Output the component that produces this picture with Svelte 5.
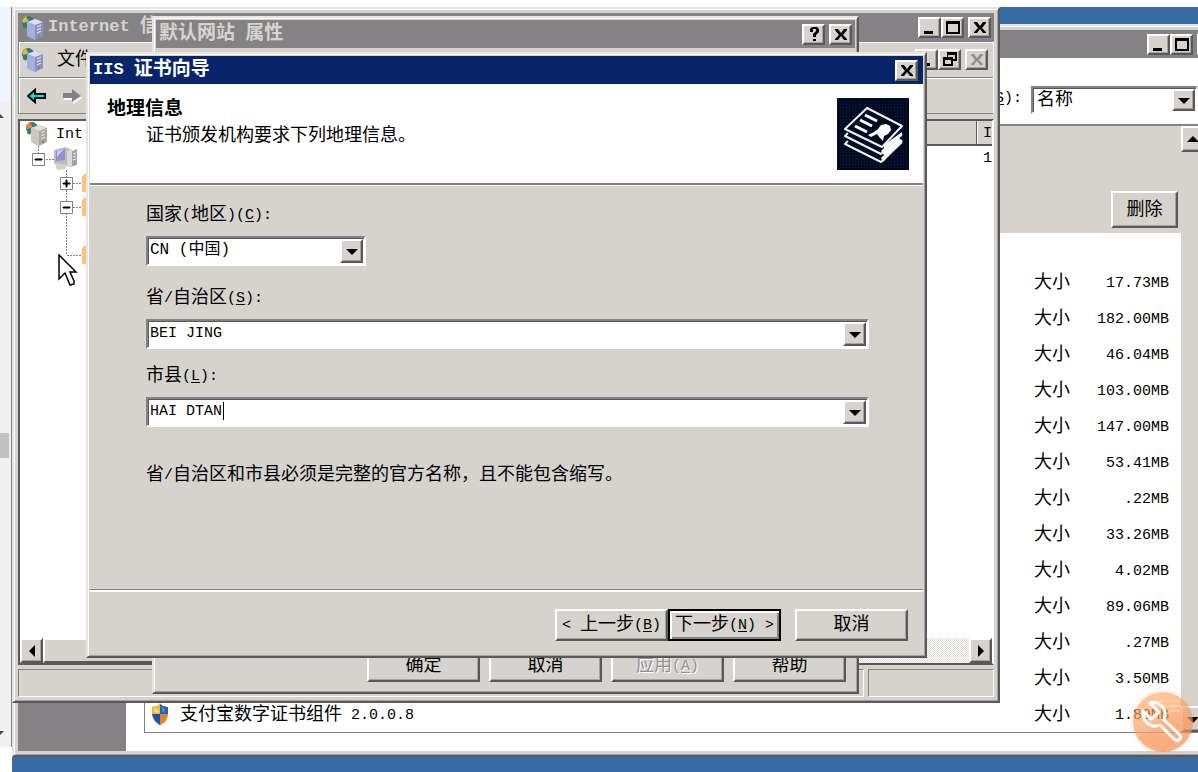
<script>
  const sizes = ['17.73', '182.00', '46.04', '103.00', '147.00', '53.41', '.22', '33.26', '4.02', '89.06', '.27', '3.50', '1.89'];
  let country = $state('CN');
  let province = $state('BEI JING');
  let city = $state('HAI DTAN');

  // Splits a label into Chinese and Latin runs; "_X" marks an access key.
  function runs(label) {
    return label
      .split(/(_[A-Z]|[\x20-\x5e\x60-\x7e]+)/)
      .filter(Boolean)
      .map((s) => ({
        text: s.replace('_', ''),
        key: s[0] === '_',
        latin: /^[\x20-\x7e]+$/.test(s)
      }));
  }
</script>

{#snippet tx(label)}<span class="tx">{#each runs(label) as r}<span class:latin={r.latin} class:key={r.key}>{r.text}</span>{/each}</span>{/snippet}

{#snippet glyph(kind)}
  <svg width="20" height="18" viewBox="0 0 20 18" aria-hidden="true">
    {#if kind === 'min'}
      <path d="M4 12h9v3H4z" />
    {:else if kind === 'max'}
      <path fill-rule="evenodd" d="M3 2h14v13H3zM5 5v8h10V5z" />
    {:else if kind === 'restore'}
      <path fill-rule="evenodd" d="M7 1h10v9h-4v5H3V6h4zM8 4v2h5v2h2V4zM5 9v4h6V9z" />
    {:else if kind === 'help'}
      <path d="M6 6V3l2-2h5l2 2v3l-3 3v2H9V8l3-3V3H9v3zM9 13h3v2H9z" />
    {:else}
      <path d="M4 3h3l3 4 3-4h3v1l-4 5 4 4v1h-3l-3-4-3 4H4v-1l4-4-4-5z" />
    {/if}
  </svg>
{/snippet}

{#snippet server(tint)}
  <svg class="ico" width="24" height="25" viewBox="0 0 24 25" aria-hidden="true">
    <circle cx="7" cy="7" r="6" fill={tint === 'gray' ? '#178a82' : '#1c72b4'} />
    <path d="M1 5 5 1l4 2-3 4-4 1z" fill={tint === 'gray' ? '#f08030' : '#e4b83c'} />
    <path d="m5 2 3-1 2 3-3 1zM2 9l3 1v4L2 12z" fill="#2e8c35" />
    <path d="m6 7 8-3 8 3v14l-8 4-8-4z" fill={tint === 'gray' ? '#aaa89e' : '#8d91bd'} />
    <path d="m6 7 8-3 8 3-8 3z" fill={tint === 'gray' ? '#e0dfd7' : '#dedff4'} />
    <path d="m6 7 8 3v15l-8-4z" fill={tint === 'gray' ? '#cbc9bf' : '#a8ade0'} />
    <path d="m16 12 4-2m-4 5 4-2m-4 5 4-2" stroke="#eceef8" />
    <path d="M17 20h2v2h-2z" fill="#5d9c60" />
  </svg>
{/snippet}

{#snippet tri(dir)}
  <svg width="12" height="12" viewBox="0 0 12 12" aria-hidden="true">
    {#if dir === 'down'}<path d="M0 4h12L6 10z" />
    {:else if dir === 'up'}<path d="M0 9h12L6 3z" />
    {:else if dir === 'left'}<path d="M9 0v12L3 6z" />
    {:else}<path d="M3 0v12l6-6z" />{/if}
  </svg>
{/snippet}

<div class="page">
  <div class="gutter">
    <div class="bubble"></div>
    <i class="up"></i>
    <div class="thumb"></div>
    <i class="down"></i>
  </div>

  <div class="desktop">
    <section class="win programs">
      <header class="title">
        <span class="ctl">
          <button aria-label="最小化">{@render glyph('min')}</button>
          <button aria-label="最大化">{@render glyph('max')}</button>
          <button class="gap" aria-label="关闭">{@render glyph('close')}</button>
        </span>
      </header>
      <div class="sortbar">
        <label for="sort">{@render tx('(_S):')}</label>
        <div class="combo sort">
          <select id="sort"><option>名称</option></select>
          <span class="drop">{@render tri('down')}</span>
        </div>
      </div>
      <div class="pane">
        <aside></aside>
        <div class="list">
          <div class="rows">
            <div class="selected"><button class="btn remove">{@render tx('删除')}</button></div>
            <table>
              <tbody>
                {#each sizes as size, i}
                  <tr>
                    <td class="name">
                      {#if i === sizes.length - 1}
                        <div class="prog">
                          <svg width="20" height="24" viewBox="0 0 20 24" aria-hidden="true">
                            <path d="m10 0 3 3 5 1v9l-2 5-6 5-6-5-2-5V4l5-1z" fill="#c5c7cf" />
                            <path d="M10 1v10H2V4l5-1z" fill="#f2b63a" /><path d="m10 1 3 2 5 1v7h-8z" fill="#2363b8" />
                            <path d="M2 11h8v11l-5-4-2-4z" fill="#1854ab" /><path d="M10 11h8l-1 4-2 4-5 3z" fill="#e58129" />
                            <path d="m5 5 4 2-1 3-4-1z" fill="#ffe088" /><path d="m12 4 3 3-2 3z" fill="#4aa4ec" />
                          </svg>
                          {@render tx('支付宝数字证书组件 2.0.0.8')}
                        </div>
                      {/if}
                    </td>
                    <td class="kind">{@render tx('大小')}</td>
                    <td class="size">{@render tx(size + 'MB')}</td>
                  </tr>
                {/each}
              </tbody>
            </table>
          </div>
          <div class="vscroll">
            <button aria-label="向上滚动">{@render tri('up')}</button>
            <button aria-label="向下滚动">{@render tri('down')}</button>
          </div>
        </div>
      </div>
    </section>

    <section class="win iis">
      <header class="title">
        {@render server('blue')}
        <b>{@render tx('Internet 信')}</b>
        <span class="ctl">
          <button aria-label="最小化">{@render glyph('min')}</button>
          <button aria-label="最大化">{@render glyph('max')}</button>
          <button class="gap" aria-label="关闭">{@render glyph('close')}</button>
        </span>
      </header>
      <div class="bars">
        <div class="menubar">
          {@render server('blue')}
          <span class="menu">{@render tx('文件')}</span>
          <span class="ctl child">
            <button aria-label="最小化">{@render glyph('min')}</button>
            <button aria-label="还原">{@render glyph('restore')}</button>
            <button class="gap off" aria-label="关闭" disabled>{@render glyph('close')}</button>
          </span>
        </div>
        <div class="toolbar">
          <svg width="60" height="18" viewBox="0 0 60 18" aria-hidden="true">
            <path d="M1 9 8 3v4h10v4H8v4z" fill="#00e4f4" stroke="#000" stroke-width="2" />
            <path d="M37 8h9V4l9 7-9 6v-4h-9z" fill="#fff" />
            <path d="M36 6h9V2l9 7-9 6v-4h-9z" fill="#848284" />
          </svg>
        </div>
      </div>
      <div class="view">
        <div class="split">
          <div class="tree">
            <div class="node">{@render server('gray')}{@render tx('Int')}</div>
            <svg class="branches" width="72" height="130" viewBox="0 0 72 130" aria-hidden="true">
              <g fill="none" stroke="#848284" stroke-dasharray="2 1">
                <path d="M17.500 0v7M25 13.500h9M45.500 24v7M52 37.500h8M45.500 44v11M52 61.500h8M45.500 67v42M46 109.500h14" />
              </g>
              <g fill="#fff" stroke="#848284"><path d="M11.500 7.500h12v12h-12zM39.500 31.500h12v12h-12zM39.500 55.500h12v12h-12z" /></g>
              <path d="M14 13h7v1h-7zM42 37h7v1h-7zM45 34h1v7h-1zM42 61h7v1h-7z" stroke="#000" />
              <path d="m33 4 11-3 5 2-1 13-3 5-8 1-4-5z" fill="#b9bac3" />
              <path d="m35 5 9-2v11l-9 1z" fill="#8c91cc" /><path d="m36 5 7-2-7 8z" fill="#c8cbf2" />
              <path d="m49 6 7-3v16l-7 2z" fill="#a3a2a0" /><path d="m46 5 5-2v17l-5 1z" fill="#dad9d4" />
              <path d="m34 17 12 2-2 4-8 1z" fill="#d3d2cd" /><path d="m52 8 3-1m-3 4 3-1m-3 4 3-1" stroke="#eee" />
              <g fill="#ffc27b"><path d="m61 30 5-4v20h-5zM61 54l5-4v20h-5zM61 102l5-4v20h-5z" /></g>
            </svg>
          </div>
          <div class="details">
            <div class="cols"><span></span><span class="last">{@render tx('I')}</span></div>
            <div class="cell">{@render tx('1')}</div>
          </div>
        </div>
        <div class="hscroll">
          <button aria-label="向左滚动">{@render tri('left')}</button>
          <span class="slider"></span>
          <button aria-label="向右滚动">{@render tri('right')}</button>
        </div>
      </div>
      <div class="status"><span></span><span class="small"></span></div>
    </section>

    <section class="win props">
      <header class="title">
        <b>{@render tx('默认网站 属性')}</b>
        <span class="ctl">
          <button aria-label="帮助">{@render glyph('help')}</button>
          <button class="near" aria-label="关闭">{@render glyph('close')}</button>
        </span>
      </header>
      <div class="actions">
        <button class="btn">{@render tx('确定')}</button>
        <button class="btn">{@render tx('取消')}</button>
        <button class="btn" disabled>{@render tx('应用(_A)')}</button>
        <button class="btn">{@render tx('帮助')}</button>
      </div>
    </section>

    <section class="win wizard">
      <header class="title active">
        <b>{@render tx('IIS 证书向导')}</b>
        <span class="ctl"><button aria-label="关闭">{@render glyph('close')}</button></span>
      </header>
      <div class="banner">
        <div>
          <h1>{@render tx('地理信息')}</h1>
          <p>{@render tx('证书颁发机构要求下列地理信息。')}</p>
        </div>
        <svg width="72" height="72" viewBox="0 0 72 72" aria-hidden="true">
          <defs><pattern id="weave" width="3" height="3" patternUnits="userSpaceOnUse"><path d="M0 0h3v3H0z" fill="#00040c" /><path d="M0 0h3v1H1v2H0z" fill="#001238" /></pattern></defs>
          <path d="M0 0h72v72H0z" fill="url(#weave)" />
          <path d="m47 47 18-13v4l-3 2 4 3-3 3-17 18-2-4 3-3-3-4 3-3z" fill="#fff" />
          <g fill="none" stroke="#f2f2ee" stroke-width="2" stroke-linejoin="round">
            <path d="m11 43-3 3 36 18 21-20" />
            <path d="m11 35-3 3 36 18 21-20" />
            <path d="M30 10 8 31l37 18 20-21z" fill="#000b22" />
          </g>
          <g stroke="#fff" stroke-width="3"><path d="m28 17 12 6M23 22l12 6M18 28l12 6" /></g>
          <path d="m41 31 3-4 5-1 4 2 1 4-3 4-4 2-1 5-3-3-3-4-6 3-3-2 6-3z" fill="#fff" />
        </svg>
      </div>
      <div class="form">
        <label for="country">{@render tx('国家(地区)(_C):')}</label>
        <div class="combo short">
          <select id="country" bind:value={country}><option value="CN">CN (中国)</option></select>
          <span class="drop">{@render tri('down')}</span>
        </div>
        <label for="province">{@render tx('省/自治区(_S):')}</label>
        <div class="combo">
          <input id="province" bind:value={province} />
          <button class="drop" aria-label="选择省/自治区">{@render tri('down')}</button>
        </div>
        <label for="city">{@render tx('市县(_L):')}</label>
        <div class="combo">
          <div class="edit">
            <input id="city" bind:value={city} size="8" />
            <i class="caret"></i>
          </div>
          <button class="drop" aria-label="选择市县">{@render tri('down')}</button>
        </div>
        <p>{@render tx('省/自治区和市县必须是完整的官方名称，且不能包含缩写。')}</p>
      </div>
      <footer>
        <button class="btn">{@render tx('< 上一步(_B)')}</button>
        <button class="btn default">{@render tx('下一步(_N) >')}</button>
        <button class="btn cancel">{@render tx('取消')}</button>
      </footer>
    </section>

    <svg class="cursor" width="20" height="34" viewBox="0 0 20 34" aria-hidden="true">
      <path d="M1 1v24l6-6 5 12 4-1v-3l-4-9h6z" fill="#fff" stroke="#000" stroke-width="1.500" />
    </svg>

    <button class="tool" aria-label="工具">
      <svg width="60" height="60" viewBox="0 0 60 60" aria-hidden="true">
        <path d="M5 47 31 60 60 31 45 16z" fill="#f58a52" opacity=".15" />
        <path d="M24 9h22M31 14h16M36 19h11" stroke="#ffd2a6" stroke-width="2" />
        <path d="M17 11c8-2 16 4 15 13l-1 4 15 14c4 4-1 9-5 5L27 33c-9 4-18-3-17-14l8 8 8-7z" fill="none" stroke="#fff" stroke-width="3" stroke-linejoin="round" />
      </svg>
    </button>
  </div>
</div>

<style>
  :global(body) { margin: 0; background: #fff; }
  .page, .page * { box-sizing: border-box; }
  .page {
    --face: #d6d3ce; --dark: #5a585a; --mid: #848284;
    display: flex; min-height: 100vh; padding-top: 7px; overflow: hidden;
    font-family: "Liberation Mono", "Noto Sans CJK SC", monospace; font-size: 18px; line-height: 24px; color: #000;
  }
  .page :where(h1, p) { margin: 0; font-size: 18px; }
  .page :where(button, input, select) { font: inherit; color: inherit; margin: 0; padding: 0; border-radius: 0; outline: none; }
  svg { display: block; flex: none; }
  .tx { white-space: pre; }
  .tx span { font-family: "Noto Sans CJK SC", sans-serif; line-height: 18px; }
  .tx .latin { font-family: "Liberation Mono", monospace; font-size: 15px; vertical-align: 1px; }
  .tx .key { text-decoration: underline; text-underline-offset: 2px; }
  .title .tx span, h1 .tx span { font-size: 19px; }
  .title .tx .latin { font-size: 17px; }

  .gutter { width: 12px; margin-bottom: 25px; background: #f0f0f0; display: flex; flex-direction: column; overflow: hidden; border-right: 1px solid var(--mid); }
  .bubble { height: 95px; background: #f0f4ff; border-radius: 0 6px 6px 0; }
  .up, .down { border: 4px solid transparent; width: 0; margin-left: -4px; }
  .up { border-bottom-color: #444; margin-top: 8px; }
  .thumb { width: 9px; height: 25px; background: #c1c1c1; margin-top: 315px; }
  .down { border-top-color: #444; margin-top: auto; margin-bottom: 8px; }

  .desktop { position: relative; flex: 1; min-width: 0; min-height: 765px; background: #386ca6; overflow: hidden; }
  .win {
    position: absolute; display: flex; flex-direction: column; padding: 4px; background: var(--face);
    border: 2px solid; border-color: #e7e5e1 var(--dark) var(--dark) #e7e5e1;
    box-shadow: inset 1px 1px #fff, inset -1px -1px #a5a3a0;
  }
  .programs { inset: 17px -31px 15px 0; }
  .iis { inset: 0 198px 69px 0; }
  .props { inset: 9px 339px 78px 140px; padding: 2px; }
  .wizard { inset: 45px 271px 114px 74px; padding: 2px; }

  .title { display: flex; align-items: center; height: 28px; flex: none; padding: 0 3px; background: var(--mid); color: var(--face); }
  .title.active { background: #08246b; color: #fff; padding-right: 5px; }
  .iis .title b { margin-left: 3px; }
  .ctl { display: flex; margin-left: auto; color: #000; }
  .ctl button, .vscroll button, .hscroll button, .drop {
    display: grid; place-items: center; width: 23px; height: 21px; flex: none; overflow: hidden; background: var(--face);
    border: 2px solid; border-color: #fff var(--dark) var(--dark) #fff; box-shadow: inset -1px -1px #a5a3a0;
  }
  .ctl .gap { margin-left: 4px; }
  .ctl .near { margin-left: 4px; }
  .off svg { fill: #949290; }

  .btn {
    width: 113px; height: 32px; background: var(--face); white-space: pre;
    border: 2px solid; border-color: #fff var(--dark) var(--dark) #fff; box-shadow: inset -1px -1px #a5a3a0;
  }
  .btn:disabled { color: #949290; text-shadow: 1px 1px #fff; }

  .sortbar { height: 67px; flex: none; display: flex; align-items: flex-start; justify-content: flex-end; gap: 9px; padding: 28px 25px 0 0; background: #fff; border-bottom: 1px solid var(--mid); }
  .pane { flex: 1; min-height: 0; display: flex; background: #fff; }
  aside { width: 108px; background: var(--mid); }
  .list { flex: 1; margin: 0 17px 18px 18px; display: flex; border: 1px solid var(--mid); }
  .rows { flex: 1; background: #fff; min-width: 0; }
  .selected { height: 107px; padding: 65px 3px 0 0; background: var(--face); text-align: right; }
  .remove { width: 67px; height: 37px; }
  table { width: 100%; margin-top: 32px; border-collapse: collapse; }
  tr { height: 36px; }
  td { padding: 0; }
  .prog { display: flex; align-items: center; gap: 10px; padding-left: 5px; height: 30px; }
  .kind { width: 56px; }
  .size { width: 91px; text-align: right; padding-right: 12px; }
  .vscroll { width: 24px; display: flex; flex-direction: column; justify-content: space-between; background: var(--face); }
  .vscroll button { height: 26px; width: 24px; }

  .bars { border: 1px solid var(--mid); border-right-color: #fff; box-shadow: inset 1px 1px #fff; }
  .menubar { height: 36px; display: flex; align-items: center; padding: 0 5px 0 2px; border-bottom: 1px solid var(--mid); }
  .menu { margin-left: 12px; }
  .toolbar { height: 35px; display: flex; align-items: center; padding-left: 8px; border-top: 1px solid #fff; }
  .view { flex: 1; min-height: 0; margin-top: 5px; display: flex; flex-direction: column; background: #fff; border: 2px solid; border-color: var(--dark) #fff var(--dark) var(--dark); }
  .split { flex: 1; display: flex; min-height: 0; }
  .tree { flex: 1; padding-left: 5px; }
  .node { display: flex; align-items: center; gap: 7px; height: 25px; }
  .branches { margin-left: -4px; }
  .details { width: 140px; }
  .cols { display: flex; height: 25px; background: var(--face); border-bottom: 2px solid var(--dark); }
  .cols span { flex: 1; }
  .cols .last { flex: none; width: 16px; padding-left: 6px; border-left: 1px solid var(--dark); overflow: hidden; box-shadow: inset 1px 0 #fff; }
  .cell { text-align: right; }
  .hscroll { height: 25px; display: flex; background: repeating-conic-gradient(#fff 0 25%, #dedcd8 0 50%) 0 0 / 2px 2px; }
  .hscroll button { height: 25px; }
  .hscroll button:last-child { margin-left: auto; }
  .slider { width: 200px; background: var(--face); border: 2px solid; border-color: #fff var(--dark) var(--dark) #fff; }
  .status { height: 28px; margin-top: 4px; display: flex; gap: 4px; }
  .status span { flex: 1; border: 1px solid; border-color: var(--mid) #fff #fff var(--mid); }
  .status .small { flex: none; width: 126px; }

  .actions { margin-top: auto; display: flex; justify-content: flex-end; gap: 9px; padding: 0 9px 8px 0; }

  .banner { display: flex; justify-content: space-between; align-items: flex-start; height: 99px; flex: none; padding: 14px 14px 0 17px; background: #fff; }
  h1 { font-weight: bold; height: 26px; }
  .banner p { padding-left: 39px; }
  .form { flex: 1; border-top: 2px solid var(--mid); border-bottom: 1px solid var(--mid); padding: 18px 54px 0 56px; box-shadow: inset 0 1px #fff, 0 2px #fff; }
  .form label { display: block; height: 24px; margin-bottom: 9px; }
  .combo { height: 30px; display: flex; background: #fff; border: 2px solid; border-color: var(--mid) #fff #fff var(--mid); box-shadow: inset 1px 1px var(--dark); padding: 1px; margin-bottom: 15px; }
  .combo.short { width: 220px; margin-bottom: 20px; }
  .combo.sort { height: 28px; width: 167px; margin-bottom: 0; }
  .combo :is(input, select) { flex: 1; min-width: 0; width: 100%; border: 0; background: transparent; appearance: none; padding-left: 1px; font-size: 15px; line-height: 20px; height: 22px; }
  .combo select { font-size: 16px; }
  .combo.sort select { font-size: 18px; padding-left: 3px; }
  .combo .drop { height: auto; align-self: stretch; pointer-events: none; }
  .edit { flex: 1; display: flex; align-items: flex-start; min-width: 0; }
  .edit #city { flex: none; width: 74px; }
  .caret { width: 1px; height: 18px; margin-top: 2px; background: #000; }
  .form p { margin-top: 36px; }
  footer { display: flex; justify-content: flex-end; padding: 19px 15px 13px 0; }
  .default { border: 2px solid #000; box-shadow: inset 2px 2px #fff, inset -2px -2px var(--mid); }
  .cancel { margin-left: 14px; }

  .cursor { position: absolute; left: 46px; top: 247px; }
  .tool { position: absolute; right: 5px; bottom: 20px; width: 60px; height: 60px; border: 0; border-radius: 50%; background: linear-gradient(160deg, #ffb070a8, #f58a52b8); box-shadow: 0 0 16px #f5884522; }
</style>
